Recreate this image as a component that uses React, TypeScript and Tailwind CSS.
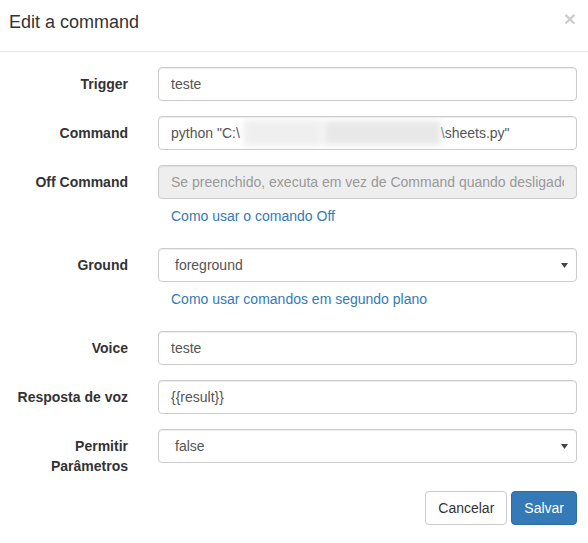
import React from 'react';

const inputCore =
  "block w-full h-[34px] px-[12px] py-[6px] text-[14px] leading-[20px] text-[#555] border border-[#ccc] rounded-[4px] shadow-[inset_0_1px_1px_rgba(0,0,0,0.075)] outline-none";
const inputBase = inputCore + " bg-white";

const Row: React.FC<{ label: React.ReactNode; children: React.ReactNode }> = ({ label, children }) => (
  <div className="flex mb-[15px]">
    <label className="w-[128px] shrink-0 text-right font-bold pt-[7px] leading-[20px] text-[#333]">{label}</label>
    <div className="ml-[30px] w-[419px]">{children}</div>
  </div>
);

const HelpLink: React.FC<{ children: React.ReactNode }> = ({ children }) => (
  <a className="block h-[34px] px-[13px] py-[7px] leading-[20px] text-[#337ab7] cursor-pointer">{children}</a>
);

const FakeSelect: React.FC<{ value: string }> = ({ value }) => (
  <div className="relative">
    <div className={inputBase + " pl-[16px]"}>{value}</div>
    {/* dropdown caret */}
    <svg className="absolute right-[9px] top-[15px]" width="7" height="5" viewBox="0 0 7 5">
      <path d="M0 0 H7 L3.5 5 Z" fill="#444" />
    </svg>
  </div>
);

export default function App() {
  return (
    <div className="w-[588px] h-[543px] bg-white font-['Liberation_Sans',Arial,sans-serif] text-[14px] text-[#333]">
      {/* Header */}
      <div className="h-[52px] border-b border-[#e5e5e5] flex items-start justify-between pl-[9px] pr-[12px] pt-[9px]">
        <h4 className="text-[18px] leading-[26px] text-[#333]">Edit a command</h4>
        <button className="text-[21px] leading-[21px] font-bold text-black opacity-20 -mt-[1px]">×</button>
      </div>

      {/* Body */}
      <form className="pt-[15px]">
        <Row label="Trigger">
          <input className={inputBase} defaultValue="teste" />
        </Row>

        <Row label="Command">
          <div className={inputBase + " flex items-center whitespace-nowrap overflow-hidden"}>
            <span>python "C:\</span>
            <span className="inline-block ml-[4px] w-[78px] h-[26px] bg-[#efefef] blur-[3px]" />
            <span className="inline-block ml-[2px] w-[117px] h-[24px] bg-[#e8e8e8] blur-[3px]" />
            <span>\sheets.py"</span>
          </div>
        </Row>

        <Row label="Off Command">
          <input
            className={inputCore + " bg-[#eee] placeholder:text-[#999] cursor-not-allowed"}
            disabled
            placeholder="Se preenchido, executa em vez de Command quando desligado"
          />
          <HelpLink>Como usar o comando Off</HelpLink>
        </Row>

        <Row label="Ground">
          <FakeSelect value="foreground" />
          <HelpLink>Como usar comandos em segundo plano</HelpLink>
        </Row>

        <Row label="Voice">
          <input className={inputBase} defaultValue="teste" />
        </Row>

        <Row label="Resposta de voz">
          <input className={inputBase} defaultValue="{{result}}" />
        </Row>

        <Row label={<>Permitir<br />Parâmetros</>}>
          <FakeSelect value="false" />
        </Row>

        {/* Footer */}
        <div className="flex justify-end gap-[4px] pr-[11px]">
          <button type="button" className="h-[34px] px-[12px] border border-[#ccc] rounded-[4px] bg-white text-[#333] leading-[20px]">
            Cancelar
          </button>
          <button type="button" className="h-[34px] px-[12px] border border-[#2e6da4] rounded-[4px] bg-[#337ab7] text-white leading-[20px]">
            Salvar
          </button>
        </div>
      </form>
    </div>
  );
}
